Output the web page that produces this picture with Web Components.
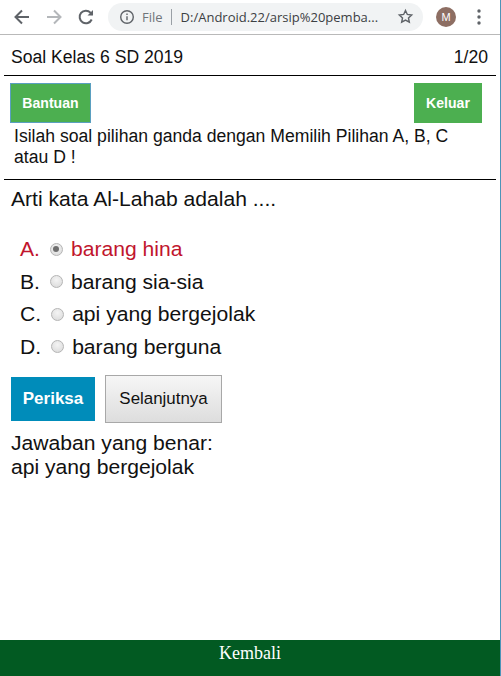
<!DOCTYPE html>
<html>
<head>
<meta charset="utf-8">
<title>Soal Kelas 6 SD 2019</title>
<style>
  html, body { margin: 0; height: 100%; background: #fff; overflow: hidden; }
  body { font-family: "Liberation Sans", Arial, sans-serif; }
  quiz-app { height: 676px; }
</style>
</head>
<body>
<quiz-app>
  <browser-bar slot="chrome" url="D:/Android.22/arsip%20pemba..."></browser-bar>
  <quiz-header slot="main" title="Soal Kelas 6 SD 2019" count="1/20"></quiz-header>
  <quiz-help slot="main">Isilah soal pilihan ganda dengan Memilih Pilihan A, B, C atau D !</quiz-help>
  <quiz-question slot="main"></quiz-question>
  <kembali-bar slot="footer">Kembali</kembali-bar>
</quiz-app>

<script>
class QuizApp extends HTMLElement {
  connectedCallback() {
    if (this.shadowRoot) return;
    this.attachShadow({ mode: "open" });
    this.shadowRoot.innerHTML = `
      <style>
        :host { display: flex; flex-direction: column; box-sizing: border-box; border-right: 1px solid #4d94b8; }
        main { flex: 1; min-height: 0; }
      </style>
      <slot name="chrome"></slot>
      <main><slot name="main"></slot></main>
      <slot name="footer"></slot>`;
  }
}

class BrowserBar extends HTMLElement {
  connectedCallback() {
    if (this.shadowRoot) return;
    this.attachShadow({ mode: "open" });
    this.shadowRoot.innerHTML = `
      <style>
        :host { display: flex; align-items: center; height: 35px; box-sizing: border-box;
          border-bottom: 1px solid #b9b9b9; background: #fff; padding: 0 0 1px 12px; }
        svg { display: block; flex: none; }
        .nav { display: flex; gap: 12px; align-items: center; }
        .omni { display: flex; align-items: center; width: 315px; height: 28px; margin-left: 12px;
          border-radius: 14px; background: #f1f3f4; padding: 0 9px 0 11px; box-sizing: border-box;
          font: 13px "Open Sans", "Liberation Sans", sans-serif; color: #3c4043; white-space: nowrap; }
        .file { color: #70757a; margin-left: 7px; }
        .sep { width: 1px; height: 16px; background: #9aa0a6; margin: 0 9px 0 8px; }
        .url { flex: 1; overflow: hidden; }
        .avatar { width: 20px; height: 20px; border-radius: 50%; background: #8d6e63; color: #fff;
          margin-left: 13px; display: grid; place-items: center; font: 11px "Liberation Sans", sans-serif; }
        .menu { margin-left: 21px; }
      </style>
      <div class="nav">
        <svg width="20" height="20" viewBox="0 0 20 20" fill="none" stroke="#5f6368" stroke-width="2"><path d="M17 10H4M10 3.5 3.5 10l6.5 6.5"/></svg>
        <svg width="20" height="20" viewBox="0 0 20 20" fill="none" stroke="#b4b7ba" stroke-width="2"><path d="M3 10h13M10 3.5l6.5 6.5-6.5 6.5"/></svg>
        <svg width="20" height="20" viewBox="0 0 20 20" fill="none" stroke="#5f6368" stroke-width="2"><path d="M15.7 12.5A6.3 6.3 0 1 1 14.5 5.6L16.5 7.6"/><path d="M17 3v5.5h-5.5z" fill="#5f6368" stroke="none"/></svg>
      </div>
      <div class="omni">
        <svg width="16" height="16" viewBox="0 0 16 16" fill="none" stroke="#5f6368" stroke-width="1.4"><circle cx="8" cy="8" r="6.3"/><path d="M8 7.2v4M8 4.4v1.5"/></svg>
        <span class="file">File</span><span class="sep"></span>
        <span class="url">${this.getAttribute("url")}</span>
        <svg width="17" height="17" viewBox="0 0 24 24" fill="none" stroke="#5f6368" stroke-width="2"><path d="M12 3.5l2.6 5.6 6.1.7-4.5 4.2 1.2 6L12 17l-5.4 3 1.2-6-4.5-4.2 6.1-.7z"/></svg>
      </div>
      <span class="avatar">M</span>
      <svg class="menu" width="4" height="16" viewBox="0 0 4 16" fill="#5f6368"><circle cx="2" cy="2" r="1.7"/><circle cx="2" cy="8" r="1.7"/><circle cx="2" cy="14" r="1.7"/></svg>`;
  }
}

class QuizHeader extends HTMLElement {
  connectedCallback() {
    if (this.shadowRoot) return;
    this.attachShadow({ mode: "open" });
    this.shadowRoot.innerHTML = `
      <style>
        :host { display: flex; justify-content: space-between; align-items: center; height: 41px;
          margin: 0 4px; padding: 4px 8px 0 7px; box-sizing: border-box; border-bottom: 1px solid #000;
          font-size: 17.6px; color: #111; }
      </style>
      <span>${this.getAttribute("title")}</span><span>${this.getAttribute("count")}</span>`;
  }
}

class QuizButton extends HTMLElement {
  connectedCallback() {
    if (this.shadowRoot) return;
    this.attachShadow({ mode: "open" });
    this.shadowRoot.innerHTML = `
      <style>
        :host { display: inline-grid; place-items: center; box-sizing: border-box; font-weight: bold; color: #fff; }
        :host([kind="green"]) { width: 68px; height: 40px; background: #4caf50; font-size: 14.08px; }
        :host([kind="green"][focused]) { width: 81px; box-shadow: inset 0 0 0 1px #5a9fc0; }
        :host([kind="blue"]) { width: 84px; height: 44px; background: #008cba; font-size: 17px; }
        :host([kind="plain"]) { width: 117px; height: 48px; font-weight: normal; font-size: 16.9px; color: #111;
          border: 1px solid #a8a8a8; background: linear-gradient(#f6f6f6, #dddddd); }
      </style>
      <slot></slot>`;
  }
}

class QuizHelp extends HTMLElement {
  connectedCallback() {
    if (this.shadowRoot) return;
    this.attachShadow({ mode: "open" });
    this.shadowRoot.innerHTML = `
      <style>
        :host { display: block; margin: 0 4px; padding: 7px 14px 0 6px; box-sizing: border-box; height: 104px;
          border-bottom: 1px solid #000; }
        .row { display: flex; justify-content: space-between; }
        p { margin: 3px 24px 0 4px; font-size: 17.6px; line-height: 21px; color: #111; }
      </style>
      <div class="row">
        <quiz-button kind="green" focused>Bantuan</quiz-button>
        <quiz-button kind="green">Keluar</quiz-button>
      </div>
      <p><slot></slot></p>`;
  }
}

class QuizOption extends HTMLElement {
  connectedCallback() {
    if (this.shadowRoot) return;
    const checked = this.hasAttribute("checked");
    this.attachShadow({ mode: "open" });
    this.shadowRoot.innerHTML = `
      <style>
        :host { display: flex; align-items: center; height: 32.5px; font-size: 21.12px; color: #111; }
        :host([wrong]) { color: #c1152d; }
        .radio { width: 11px; height: 11px; border-radius: 50%; border: 1px solid #b5b5b5; flex: none;
          background: radial-gradient(circle at 50% 35%, #f4f4f4, #d8d8d8); margin: 0 8px 0 10px; display: grid; place-items: center; }
        .radio i { width: 6px; height: 6px; border-radius: 50%; background: #6e6e6e; }
      </style>
      <span>${this.getAttribute("key")}</span>
      <span class="radio">${checked ? "<i></i>" : ""}</span>
      <span><slot></slot></span>`;
  }
}

class QuizQuestion extends HTMLElement {
  connectedCallback() {
    if (this.shadowRoot) return;
    this.attachShadow({ mode: "open" });
    this.shadowRoot.innerHTML = `
      <style>
        :host { display: block; padding: 7px 11px 0; font-size: 21.12px; color: #111; }
        .ask { line-height: 24px; margin-bottom: 22px; }
        .list { margin-left: 9px; }
        .actions { display: flex; align-items: center; gap: 10px; margin: 12px 0 8px; }
        .answer { line-height: 24px; }
      </style>
      <div class="ask">Arti kata Al-Lahab adalah ....</div>
      <div class="list">
        <quiz-option key="A." checked wrong>barang hina</quiz-option>
        <quiz-option key="B.">barang sia-sia</quiz-option>
        <quiz-option key="C.">api yang bergejolak</quiz-option>
        <quiz-option key="D.">barang berguna</quiz-option>
      </div>
      <div class="actions">
        <quiz-button kind="blue">Periksa</quiz-button>
        <quiz-button kind="plain">Selanjutnya</quiz-button>
      </div>
      <div class="answer">Jawaban yang benar:<br>api yang bergejolak</div>`;
  }
}

class KembaliBar extends HTMLElement {
  connectedCallback() {
    if (this.shadowRoot) return;
    this.attachShadow({ mode: "open" });
    this.shadowRoot.innerHTML = `
      <style>
        :host { display: block; height: 36px; background: #025a22; color: #fff; text-align: center;
          font: 18px/27px "Liberation Serif", serif; }
      </style>
      <slot></slot>`;
  }
}

customElements.define("quiz-app", QuizApp);
customElements.define("browser-bar", BrowserBar);
customElements.define("quiz-header", QuizHeader);
customElements.define("quiz-button", QuizButton);
customElements.define("quiz-help", QuizHelp);
customElements.define("quiz-option", QuizOption);
customElements.define("quiz-question", QuizQuestion);
customElements.define("kembali-bar", KembaliBar);
</script>
</body>
</html>
